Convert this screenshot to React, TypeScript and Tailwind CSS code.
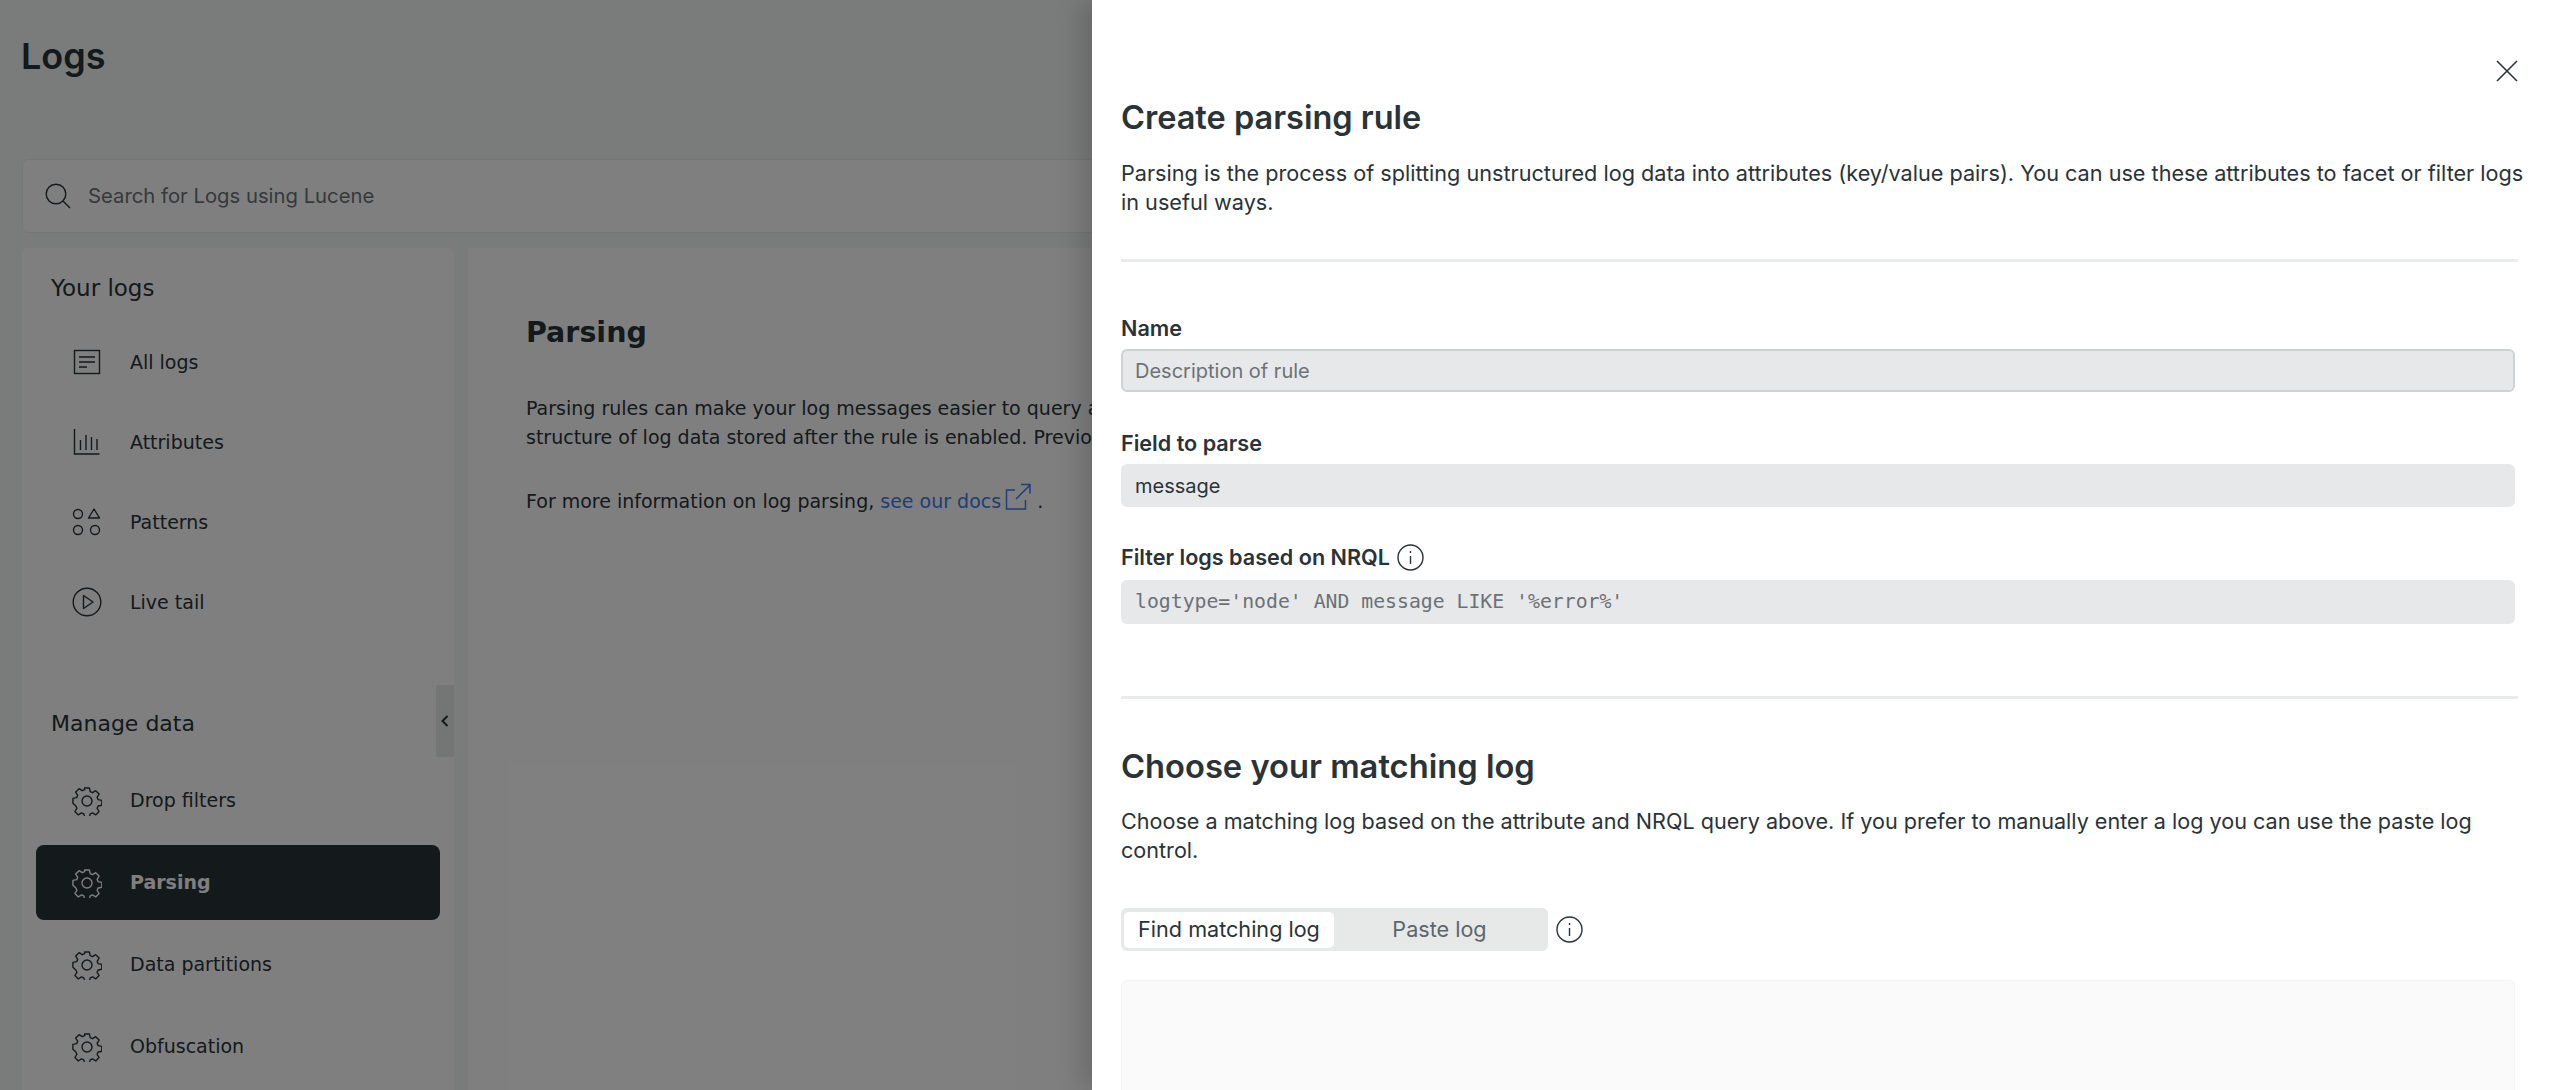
import React from "react";

const sans = "font-['Inter',sans-serif]";
const deja = "font-['DejaVu_Sans',sans-serif]";

function Gear() {
  return (
    <svg width="30" height="30" viewBox="0 0 30 30" fill="none" stroke="currentColor" strokeWidth="1.4" strokeLinejoin="round">
      <circle cx="15" cy="15" r="5" />
      <path d="M12.6 2h4.8l.8 3.7 2.3 1 3.2-2 3.4 3.4-2 3.2 1 2.3 3.7.8v4.8l-3.7.8-1 2.3 2 3.2-3.4 3.4-3.2-2-2.3 1-.8 2.8h-4.8l-.8-2.8-2.3-1-3.2 2-3.4-3.4 2-3.2-1-2.3L.9 17.2v-4.8l3.8-.8 1-2.3-2-3.2 3.4-3.4 3.2 2 2.3-1z" />
    </svg>
  );
}
function ListIcon() {
  return (
    <svg width="28" height="28" viewBox="0 0 28 28" fill="none" stroke="currentColor" strokeWidth="1.4">
      <rect x="1.5" y="2.5" width="25" height="23" />
      <path d="M6 9h16M6 14h16M6 19h8" />
    </svg>
  );
}
function BarsIcon() {
  return (
    <svg width="28" height="28" viewBox="0 0 28 28" fill="none" stroke="currentColor" strokeWidth="1.4">
      <path d="M1.5 1v25h25M7.5 12v10M13 7v15M18.5 9v13M24 11v11" />
    </svg>
  );
}
function ShapesIcon() {
  return (
    <svg width="30" height="30" viewBox="0 0 30 30" fill="none" stroke="currentColor" strokeWidth="1.4" strokeLinejoin="round">
      <circle cx="6" cy="7" r="4.5" />
      <path d="M22 2l5.5 9h-11z" />
      <circle cx="6" cy="23" r="4.5" />
      <circle cx="23" cy="23" r="4.5" />
    </svg>
  );
}
function PlayIcon() {
  return (
    <svg width="30" height="30" viewBox="0 0 30 30" fill="none" stroke="currentColor" strokeWidth="1.4" strokeLinejoin="round">
      <circle cx="15" cy="15" r="13.8" />
      <path d="M11.5 8.5L21 15l-9.5 6.5z" />
    </svg>
  );
}
function Info({ className }: { className?: string }) {
  return (
    <svg className={className} width="27" height="27" viewBox="0 0 27 27" fill="none" stroke="#293338" strokeWidth="1.4">
      <circle cx="13.5" cy="13.5" r="12.5" />
      <path d="M13.5 12v8M13.5 7v2" />
    </svg>
  );
}
function Item({ icon, label, active, h }: { icon: React.ReactNode; label: string; active?: boolean; h: string }) {
  return (
    <div className={`flex items-center rounded-[8px] ${h} ${active ? "bg-[#293338] text-white font-bold" : ""}`}>
      <span className="flex h-[30px] w-[30px] ml-[36px] mr-[28px] shrink-0 items-center justify-center">{icon}</span>
      <span className="text-[19px]">{label}</span>
    </div>
  );
}

export default function App() {
  return (
    <div className={`relative h-[1090px] w-[2554px] overflow-hidden bg-[#f4f7f6] text-[#293338] ${sans}`}>
      <div className="h-[159px] px-[21px] pt-[31px]">
        <h1 className="text-[36px] leading-[50px] font-semibold">Logs</h1>
      </div>
      <div className="mx-[22px] flex h-[74px] items-center rounded-[6px] border border-[#eceded] bg-white">
        <svg className="ml-[22px]" width="26" height="26" viewBox="0 0 26 26" fill="none" stroke="#293338" strokeWidth="1.4">
          <circle cx="11" cy="11" r="9.8" />
          <path d="M18 18l7 7" />
        </svg>
        <span className="ml-[17px] text-[20.3px] text-[#6b7276]">Search for Logs using Lucene</span>
      </div>
      <div className="mt-[15px] flex gap-[14px] pl-[22px]">
        <aside className={`relative h-[900px] w-[432px] shrink-0 rounded-t-[6px] bg-white ${deja}`}>
          <div className="pl-[29px] pt-[23px] text-[23px] leading-[34px]">Your logs</div>
          <div className="mt-[17px] px-[14px]">
            <Item h="h-[80px]" icon={<ListIcon />} label="All logs" />
            <Item h="h-[80px]" icon={<BarsIcon />} label="Attributes" />
            <Item h="h-[80px]" icon={<ShapesIcon />} label="Patterns" />
            <Item h="h-[80px]" icon={<PlayIcon />} label="Live tail" />
          </div>
          <div className="pl-[29px] pt-[65px] text-[22px] leading-[34px]">Manage data</div>
          <div className="mt-[22px] flex flex-col gap-[7px] px-[14px]">
            <Item h="h-[75px]" icon={<Gear />} label="Drop filters" />
            <Item h="h-[75px]" icon={<Gear />} label="Parsing" active />
            <Item h="h-[75px]" icon={<Gear />} label="Data partitions" />
            <Item h="h-[75px]" icon={<Gear />} label="Obfuscation" />
          </div>
          <div className="absolute right-0 top-[437px] flex h-[72px] w-[18px] items-center justify-center rounded-l-[3px] bg-[#e8eaea]">
            <svg width="10" height="14" viewBox="0 0 10 14" fill="none" stroke="#293338" strokeWidth="2">
              <path d="M7.5 2L2.5 7l5 5" />
            </svg>
          </div>
        </aside>
        <main className={`h-[900px] flex-1 bg-white pl-[58px] pt-[62px] ${deja}`}>
          <h2 className="text-[28.5px] leading-[46px] font-bold">Parsing</h2>
          <p className="mt-[38px] whitespace-nowrap text-[19px] leading-[29px]">
            Parsing rules can make your log messages easier to query and
            <br />
            structure of log data stored after the rule is enabled. Previously
          </p>
          <p className="mt-[35px] flex items-start text-[19px] leading-[29px]">
            For more information on log parsing,&nbsp;
            <span className="text-[#3a7cf0]">see our docs</span>
            <svg className="ml-[4px] -mt-[4px] shrink-0" width="26" height="28" viewBox="0 0 26 28" fill="none" stroke="#3a7cf0" strokeWidth="1.5">
              <path d="M10 7H1.5v19h19v-9M11 16L25 2M16 1.5h9v9" />
            </svg>
            &nbsp;.
          </p>
        </main>
      </div>

      <div className="absolute inset-0 bg-black/50" />

      <div className="absolute inset-y-0 right-0 w-[1462px] overflow-hidden bg-white pl-[29px] pr-[36px] shadow-[-12px_0_24px_rgba(0,0,0,0.15)]">
        <svg className="absolute left-[1404px] top-[60px]" width="22" height="22" viewBox="0 0 22 22" fill="none" stroke="#293338" strokeWidth="1.6">
          <path d="M1 1l20 20M21 1L1 21" />
        </svg>
        <h2 className="pt-[95px] text-[32.5px] leading-[46px] font-semibold">Create parsing rule</h2>
        <p className="mt-[18px] w-[1420px] whitespace-nowrap text-[21.65px] leading-[29px]">
          Parsing is the process of splitting unstructured log data into attributes (key/value pairs). You can use these attributes to facet or filter logs
          <br />
          in useful ways.
        </p>
        <div className="mt-[42px] h-[3px] w-[1397px] bg-[#eaebeb]" />

        <label className="mt-[51px] block text-[21.6px] leading-[30px] font-semibold">Name</label>
        <div className="mt-[6px] flex h-[43px] w-[1394px] items-center rounded-[6px] border-2 border-[#cfd2d4] bg-[#e7e8ea] pl-[12px] text-[20px] text-[#6b7276]">
          Description of rule
        </div>
        <label className="mt-[36px] block text-[21.6px] leading-[30px] font-semibold">Field to parse</label>
        <div className="mt-[6px] flex h-[43px] w-[1394px] items-center rounded-[6px] bg-[#e7e8ea] pl-[14px] text-[20px]">message</div>
        <div className="mt-[35px] flex h-[30px] items-center">
          <label className="text-[21.6px] leading-[30px] font-semibold">Filter logs based on NRQL</label>
          <Info className="ml-[7px]" />
        </div>
        <div className="mt-[8px] flex h-[44px] w-[1394px] items-center rounded-[6px] bg-[#e7e8ea] pl-[14px] font-['DejaVu_Sans_Mono',monospace] text-[19.8px] text-[#6b7276]">
          logtype='node' AND message LIKE '%error%'
        </div>
        <div className="mt-[72px] h-[3px] w-[1397px] bg-[#eaebeb]" />

        <h2 className="mt-[44px] text-[32.7px] leading-[46px] font-semibold">Choose your matching log</h2>
        <p className="mt-[18px] w-[1397px] text-[21.6px] leading-[29px]">
          Choose a matching log based on the attribute and NRQL query above. If you prefer to manually enter a log you can use the paste log control.
        </p>
        <div className="mt-[43px] flex items-center">
          <div className="flex h-[43px] w-[427px] items-center rounded-[6px] bg-[#e7e8e8] p-[3px]">
            <div className="flex h-[36px] w-[210px] items-center justify-center rounded-[5px] bg-white text-[21.6px]">Find matching log</div>
            <div className="flex-1 text-center text-[21.6px] text-[#5d666b]">Paste log</div>
          </div>
          <Info className="ml-[8px]" />
        </div>
        <div className="mt-[29px] h-[200px] w-[1394px] rounded-[6px] border border-[#f3f4f4] bg-[#fafafa]" />
      </div>
    </div>
  );
}
